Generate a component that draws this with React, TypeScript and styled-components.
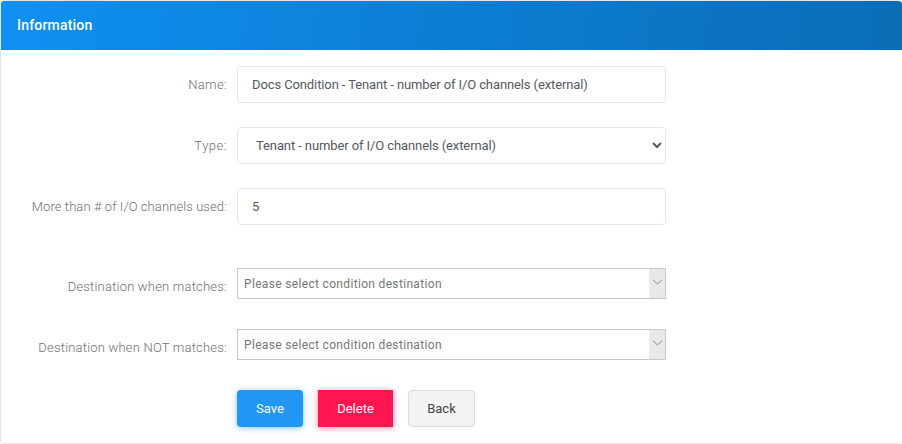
import { createGlobalStyle } from 'styled-components'
import styled from 'styled-components'

const Global = createGlobalStyle`
    html, body {
        margin: 0;
        padding: 0;
        background: #fff;
        font-family: Roboto, "Liberation Sans", sans-serif;
    }
    * { box-sizing: border-box; }
`
const Card = styled.div`
    width: 902px;
    height: 444px;
    background: #fff;
    border: 1px solid #e6e6e6;
    border-right: 0;
    border-radius: 4px;
    overflow: hidden;
`
const Header = styled.div`
    height: 49px;
    padding: 0 16px 2px;
    display: flex;
    align-items: center;
    background: linear-gradient(100deg, #0f90f2 0%, #0a6cb5 100%);
    color: #fff;
    font-size: 14px;
    font-weight: 500;
    letter-spacing: 0.2px;
`
const Form = styled.form`
    padding-top: 16px;
    display: flex;
    flex-direction: column;
`
const Row = styled.div<{ $after: number }>`
    display: flex;
    align-items: center;
    margin-bottom: ${p => p.$after}px;
`
const Label = styled.label<{ $drop?: boolean; $spacing: number }>`
    width: 226px;
    margin-right: 10px;
    padding-top: ${p => (p.$drop ? '6px' : '0')};
    text-align: right;
    font-size: 13px;
    font-weight: 300;
    color: #707070;
    letter-spacing: ${p => p.$spacing}px;
`
const Input = styled.input`
    width: 429px;
    height: 37px;
    padding: 0 14px;
    border: 1px solid #e4e7ea;
    border-radius: 4px;
    background: #fff;
    color: #55595e;
    font: 400 13px Roboto, sans-serif;
    letter-spacing: -0.11px;
    outline: none;
`
const NativeSelect = styled.select`
    width: 429px;
    height: 37px;
    padding: 0 14px;
    border: 1px solid #e4e7ea;
    border-radius: 4px;
    background: #fff;
    color: #55595e;
    font: 400 13px Roboto, sans-serif;
    letter-spacing: -0.1px;
    outline: none;
`
const Chooser = styled.div`
    width: 429px;
    height: 31px;
    display: flex;
    border: 1px solid #c8c8c8;
    background: #fff;
`
const ChooserText = styled.div`
    flex: 1;
    padding: 0 6px;
    display: flex;
    align-items: center;
    font-size: 12px;
    color: #777;
    letter-spacing: 0.33px;
`
const ChooserArrow = styled.div`
    width: 16px;
    padding-bottom: 4px;
    display: flex;
    align-items: center;
    justify-content: center;
    background: #e8e8e8;
`
const Buttons = styled.div`
    margin-left: 236px;
    display: flex;
    gap: 15px;
`
const Button = styled.button<{ $kind: 'save' | 'delete' | 'back' }>`
    height: 37px;
    border-radius: ${p => (p.$kind === 'delete' ? '0' : '4px')};
    font: 400 13px Roboto, sans-serif;
    cursor: pointer;
    width: ${p => ({ save: 66, delete: 75, back: 67 }[p.$kind])}px;
    border: ${p => (p.$kind === 'back' ? '1px solid #dcdcdc' : '0')};
    color: ${p => (p.$kind === 'back' ? '#444' : '#fff')};
    background: ${p => ({ save: '#2196f3', delete: '#ff1650', back: '#f3f3f3' }[p.$kind])};
    box-shadow: ${p =>
        ({
            save: '0 1px 6px rgba(33,150,243,.55)',
            delete: '0 1px 6px rgba(255,22,80,.5)',
            back: 'none',
        }[p.$kind])};
`

const Arrow = () => (
    <svg width="11" height="6" viewBox="0 0 11 6">
        <path d="M1 .8l4.5 4.2L10 .8" fill="none" stroke="#8a8a8a" strokeWidth="1" />
    </svg>
)

const Destination = ({ label, after }: { label: string; after: number }) => (
    <Row $after={after}>
        <Label $drop $spacing={0.2}>{label}</Label>
        <Chooser>
            <ChooserText>Please select condition destination</ChooserText>
            <ChooserArrow><Arrow /></ChooserArrow>
        </Chooser>
    </Row>
)

export default function App() {
    return (
        <>
            <Global />
            <Card>
                <Header>Information</Header>
                <Form>
                    <Row $after={24}>
                        <Label $spacing={0.32}>Name:</Label>
                        <Input defaultValue="Docs Condition - Tenant - number of I/O channels (external)" />
                    </Row>
                    <Row $after={24}>
                        <Label $spacing={0.5}>Type:</Label>
                        <NativeSelect defaultValue="a">
                            <option value="a">Tenant - number of I/O channels (external)</option>
                        </NativeSelect>
                    </Row>
                    <Row $after={43}>
                        <Label $spacing={0.09}>More than # of I/O channels used:</Label>
                        <Input defaultValue="5" />
                    </Row>
                    <Destination label="Destination when matches:" after={30} />
                    <Destination label="Destination when NOT matches:" after={30} />
                    <Buttons>
                        <Button type="button" $kind="save">Save</Button>
                        <Button type="button" $kind="delete">Delete</Button>
                        <Button type="button" $kind="back">Back</Button>
                    </Buttons>
                </Form>
            </Card>
        </>
    )
}
